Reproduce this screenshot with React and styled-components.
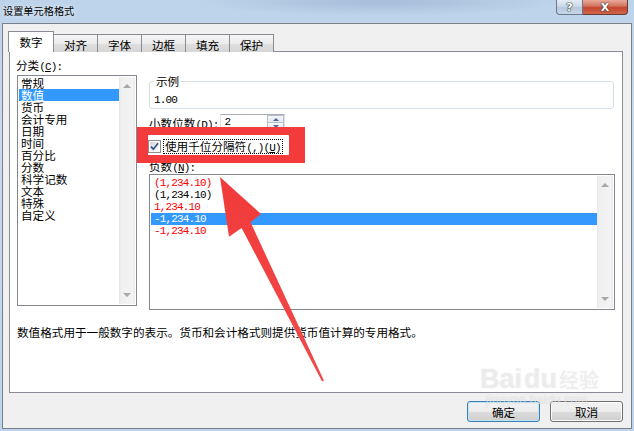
import React from 'react';
import styled, { createGlobalStyle } from 'styled-components';

const CJK = `"Noto Sans CJK SC", "Noto Sans CJK TC", sans-serif`;
const MONO = `"Liberation Mono", "DejaVu Sans Mono", monospace`;

const Global = createGlobalStyle`
  html, body { margin: 0; padding: 0; background: #fff; }
  body { width: 634px; height: 431px; overflow: hidden; font-family: ${CJK}; }
  *, *::before, *::after { box-sizing: border-box; }
`;

const Window = styled.div`
  position: relative;
  width: 634px;
  height: 431px;
  padding: 0 2px 2px 2px;
  display: flex;
  flex-direction: column;
  overflow: hidden;
  font-family: ${CJK};
  font-size: 11.6px;
  color: #000;
  background:
    radial-gradient(ellipse 180px 14px at 380px 2px, rgba(120,150,185,0.35), transparent),
    linear-gradient(180deg, #bdd3ea 0%, #c8dbef 30%, #bcd4ec 100%);
`;

const TitleBar = styled.div`
  height: 23px;
  flex: none;
  display: flex;
  justify-content: space-between;
  align-items: flex-start;
`;

const Title = styled.div`
  padding: 4px 0 0 1px;
  font-size: 10.2px;
  line-height: 14px;
  text-shadow: 0 0 5px rgba(255,255,255,0.9);
`;

const CaptionGroup = styled.div`
  display: flex;
  margin-right: 4px;
`;

const CaptionButton = styled.div`
  height: 15px;
  width: ${p => p.$w}px;
  display: flex;
  align-items: center;
  justify-content: center;
  color: #fff;
  font-family: "DejaVu Sans", sans-serif;
  font-weight: bold;
  font-size: ${p => p.$fs}px;
  line-height: 1;
  text-shadow: 0 0 1px #333, 0 0 1px #333, 0 0 2px #555;
  border: 1px solid ${p => (p.$close ? '#6b3a33' : '#6b7889')};
  border-top: none;
  ${p => (p.$close ? 'border-left: none;' : '')}
  border-radius: ${p => (p.$close ? '0 0 4px 0' : '0 0 0 4px')};
  background: ${p =>
    p.$close
      ? 'linear-gradient(180deg, #e9a99a 0%, #d67a64 40%, #c5462f 55%, #d0664a 100%)'
      : 'linear-gradient(180deg, #e4ecf6 0%, #cbd9ea 45%, #b6c8de 55%, #c9d8ea 100%)'};
`;

const Client = styled.div`
  flex: 1;
  background: #f0f0f0;
  border: 1px solid #7a808a;
  display: flex;
  flex-direction: column;
  padding: 7px 8px 0 5px;
`;

const TabStrip = styled.div`
  display: flex;
  align-items: flex-end;
  height: 21px;
  margin-bottom: -1px;
  position: relative;
  z-index: 2;
`;

const Tab = styled.div`
  width: ${p => (p.$active ? 46 : 45)}px;
  height: ${p => (p.$active ? 21 : 18)}px;
  margin-left: ${p => (p.$active ? 0 : -1)}px;
  border: 1px solid #898c95;
  border-bottom: none;
  display: flex;
  justify-content: center;
  align-items: center;
  padding-top: ${p => (p.$active ? 0 : 3)}px;
  line-height: 14px;
  background: ${p =>
    p.$active
      ? '#fff'
      : 'linear-gradient(180deg, #f5f5f5 0%, #ececec 50%, #dfdfdf 51%, #d6d6d6 100%)'};
  position: relative;
  z-index: ${p => (p.$active ? 2 : 1)};
`;

const Panel = styled.div`
  width: 614px;
  height: 342px;
  margin-left: 1px;
  background: #fff;
  border: 1px solid #898c95;
  padding: 6px 7px 0 6px;
  display: flex;
  flex-direction: column;
`;

const Columns = styled.div`
  display: flex;
  gap: 12px;
`;

const LeftColumn = styled.div`
  width: 121px;
  display: flex;
  flex-direction: column;
`;

const RightColumn = styled.div`
  flex: 1;
  display: flex;
  flex-direction: column;
`;

const Label = styled.div`
  height: 14px;
  line-height: 14px;
  white-space: nowrap;
  margin-top: ${p => p.$mt || 0}px;
`;

const Latin = styled.span`
  font-family: ${MONO};
  font-size: 11px;
  letter-spacing: -0.85px;
`;

const Access = styled.span`
  text-decoration: underline;
`;

const ListBox = styled.div`
  width: ${p => p.$w};
  height: ${p => p.$h}px;
  margin: ${p => p.$m};
  border: 1px solid #828790;
  padding: 1px;
  display: flex;
  background: #fff;
`;

const Items = styled.div`
  flex: 1;
  padding-top: ${p => p.$pt || 0}px;
  overflow: hidden;
`;

const Item = styled.div`
  height: 12px;
  line-height: 12px;
  padding-left: ${p => p.$pl}px;
  white-space: nowrap;
  font-family: ${p => (p.$mono ? MONO : CJK)};
  font-size: ${p => (p.$mono ? '11px' : '11.6px')};
  letter-spacing: ${p => (p.$mono ? '-0.85px' : '0')};
  color: ${p => (p.$selected ? '#fff' : p.$red ? '#ff0000' : '#000')};
  background: ${p => (p.$selected ? '#3399ff' : 'transparent')};
`;

const ScrollBar = styled.div`
  width: 16px;
  flex: none;
  background: linear-gradient(90deg, #e6e6e6 0%, #f0f0f0 15%, #f3f3f3 85%, #ebebeb 100%);
  display: flex;
  flex-direction: column;
  justify-content: space-between;
  align-items: center;
  padding: 7px 0 7px;
`;

const ScrollArrow = styled.div`
  width: 0;
  height: 0;
  border-left: 4px solid transparent;
  border-right: 4px solid transparent;
  ${p => (p.$down ? 'border-top: 4px solid #a8a8a8;' : 'border-bottom: 4px solid #a8a8a8;')}
`;

const GroupBox = styled.fieldset`
  margin: 18px 1px 0 0;
  padding: 0 0 0 4px;
  border: 1px solid #d5dfe5;
  border-radius: 3px;
  height: 33px;
`;

const Legend = styled.legend`
  padding: 0 2px;
  margin-left: 0;
  line-height: 11px;
  font-size: 11.6px;
`;

const SampleValue = styled.div`
  padding-top: 6px;
  line-height: 14px;
  font-family: ${MONO};
  font-size: 11px;
  letter-spacing: -0.85px;
`;

const FieldRow = styled.div`
  display: flex;
  align-items: center;
  height: ${p => p.$h}px;
  margin-top: ${p => p.$mt}px;
  gap: ${p => p.$gap || 0}px;
`;

const Spinner = styled.div`
  width: 65px;
  height: 17px;
  margin-left: 2px;
  display: flex;
  border: 1px solid #abadb3;
  border-color: #abadb3 #dbdfe6 #e3e9ef #e2e3ea;
  background: #fff;
`;

const SpinText = styled.div`
  flex: 1;
  padding-left: 3px;
  line-height: 15px;
  font-family: ${MONO};
  font-size: 11px;
`;

const SpinButtons = styled.div`
  width: 17px;
  display: flex;
  flex-direction: column;
`;

const SpinHalf = styled.div`
  flex: 1;
  display: flex;
  align-items: center;
  justify-content: center;
  border: 1px solid #b6c0cc;
  ${p => (p.$down ? 'border-top: none;' : '')}
  background: linear-gradient(180deg, #f4f6f9 0%, #e3e8ee 100%);
`;

const SpinArrow = styled.div`
  width: 0;
  height: 0;
  border-left: 3px solid transparent;
  border-right: 3px solid transparent;
  ${p => (p.$down ? 'border-top: 3px solid #4d6794;' : 'border-bottom: 3px solid #4d6794;')}
`;

const CheckBox = styled.div`
  width: 13px;
  height: 13px;
  margin-left: -1px;
  border: 1px solid #8f8f8f;
  padding: 1px;
  background: #fff;
`;

const CheckInner = styled.div`
  width: 100%;
  height: 100%;
  background: linear-gradient(135deg, #d3d3d3 0%, #f0f0f0 60%, #fdfdfd 100%);
  display: flex;
  align-items: center;
  justify-content: center;
`;

const FocusLabel = styled.div`
  border: 1px dotted #000;
  height: 15px;
  line-height: 13px;
  padding: 0 1px;
  white-space: nowrap;
`;

const Description = styled.div`
  margin-top: 15px;
  margin-left: 1px;
  line-height: 14px;
  white-space: nowrap;
`;

const ButtonRow = styled.div`
  display: flex;
  justify-content: flex-end;
  gap: 10px;
  margin-top: 8px;
`;

const Button = styled.div`
  width: 73px;
  height: 21px;
  border-radius: 3px;
  border: 1px solid ${p => (p.$default ? '#3c7fb1' : '#707070')};
  box-shadow: ${p => (p.$default ? 'inset 0 0 0 1px #bde4f7' : 'inset 0 0 0 1px #fcfcfc')};
  background: linear-gradient(180deg, #f3f3f3 0%, #ebebeb 50%, #dddddd 51%, #cfcfcf 100%);
  display: flex;
  align-items: center;
  justify-content: center;
  line-height: 14px;
`;

const Callout = styled.div`
  position: absolute;
  left: 137px;
  top: 127px;
  width: 168px;
  height: 36px;
  border-style: solid;
  border-color: #f33b3b;
  border-width: 8px 16px 8px 11px;
  pointer-events: none;
`;

const Overlay = styled.svg`
  position: absolute;
  left: 0;
  top: 0;
  pointer-events: none;
`;

const Watermark = styled.div`
  position: absolute;
  left: 480px;
  top: 366px;
  display: flex;
  flex-direction: column;
  align-items: flex-start;
  color: rgba(255, 255, 255, 0.55);
  text-shadow: 0 0 1px rgba(120, 120, 120, 0.3);
  pointer-events: none;
`;

const WatermarkLogo = styled.div`
  display: flex;
  align-items: baseline;
  font-family: "Liberation Sans", Arial, sans-serif;
  font-weight: bold;
  font-size: 27px;
  line-height: 27px;
  gap: 2px;
`;

const WatermarkCJK = styled.span`
  font-family: ${CJK};
  font-size: 20px;
  font-weight: normal;
`;

const WatermarkUrl = styled.div`
  font-family: "Liberation Sans", Arial, sans-serif;
  font-size: 12px;
  line-height: 14px;
  margin-left: 6px;
  letter-spacing: 0.3px;
`;

const categories = ['常规', '数值', '货币', '会计专用', '日期', '时间', '百分比', '分数', '科学记数', '文本', '特殊', '自定义'];

const negatives = [
  { text: '(1,234.10)', red: true },
  { text: '(1,234.10)', red: false },
  { text: '1,234.10', red: true },
  { text: '-1,234.10', selected: true },
  { text: '-1,234.10', red: true },
];

const tabs = ['数字', '对齐', '字体', '边框', '填充', '保护'];

export default function App() {
  return (
    <>
      <Global />
      <Window>
        <TitleBar>
          <Title>设置单元格格式</Title>
          <CaptionGroup>
            <CaptionButton $w={27} $fs={11}>?</CaptionButton>
            <CaptionButton $w={45} $fs={11} $close>X</CaptionButton>
          </CaptionGroup>
        </TitleBar>
        <Client>
          <TabStrip>
            {tabs.map((t, i) => (
              <Tab key={t} $active={i === 0}>{t}</Tab>
            ))}
          </TabStrip>
          <Panel>
            <Columns>
              <LeftColumn>
                <Label>分类<Latin>(<Access>C</Access>):</Latin></Label>
                <ListBox $w="120px" $h={231} $m="3px 0 0 1px">
                  <Items>
                    {categories.map((c, i) => (
                      <Item key={c} $pl={2} $selected={i === 1}>{c}</Item>
                    ))}
                  </Items>
                  <ScrollBar>
                    <ScrollArrow />
                    <ScrollArrow $down />
                  </ScrollBar>
                </ListBox>
              </LeftColumn>
              <RightColumn>
                <GroupBox>
                  <Legend>示例</Legend>
                  <SampleValue>1.00</SampleValue>
                </GroupBox>
                <FieldRow $h={17} $mt={5}>
                  <Label>小数位数<Latin>(<Access>D</Access>):</Latin></Label>
                  <Spinner>
                    <SpinText>2</SpinText>
                    <SpinButtons>
                      <SpinHalf><SpinArrow /></SpinHalf>
                      <SpinHalf $down><SpinArrow $down /></SpinHalf>
                    </SpinButtons>
                  </Spinner>
                </FieldRow>
                <FieldRow $h={16} $mt={7} $gap={2}>
                  <CheckBox>
                    <CheckInner>
                      <svg width="9" height="9" viewBox="0 0 9 9">
                        <path d="M1 4.6 L3.4 7.2 L8 1.2" fill="none" stroke="#3b4f8a" strokeWidth="1.7" />
                      </svg>
                    </CheckInner>
                  </CheckBox>
                  <FocusLabel>使用千位分隔符<Latin>(,)(<Access>U</Access>)</Latin></FocusLabel>
                </FieldRow>
                <Label $mt={5}>负数<Latin>(<Access>N</Access>):</Latin></Label>
                <ListBox $w="100%" $h={136} $m="1px 0 0 0">
                  <Items $pt={1}>
                    {negatives.map((n, i) => (
                      <Item key={i} $mono $pl={3} $red={n.red} $selected={n.selected}>{n.text}</Item>
                    ))}
                  </Items>
                  <ScrollBar>
                    <ScrollArrow />
                    <ScrollArrow $down />
                  </ScrollBar>
                </ListBox>
              </RightColumn>
            </Columns>
            <Description>数值格式用于一般数字的表示。货币和会计格式则提供货币值计算的专用格式。</Description>
          </Panel>
          <ButtonRow>
            <Button $default>确定</Button>
            <Button>取消</Button>
          </ButtonRow>
        </Client>
        <Callout />
        <Overlay width="634" height="431" viewBox="0 0 634 431">
          <defs>
            <linearGradient id="arrowFill" x1="0" y1="0" x2="0" y2="1">
              <stop offset="0" stopColor="#f23a3a" />
              <stop offset="1" stopColor="#f04a4a" />
            </linearGradient>
          </defs>
          <polygon
            points="220,177 261,214 250.6,222.3 323.9,380.5 322.1,381.5 241.6,227.9 229,236.7"
            fill="url(#arrowFill)"
          />
        </Overlay>
        <Watermark>
          <WatermarkLogo>Bai<span>du</span><WatermarkCJK>经验</WatermarkCJK></WatermarkLogo>
          <WatermarkUrl>jingyan.baidu.com</WatermarkUrl>
        </Watermark>
      </Window>
    </>
  );
}
